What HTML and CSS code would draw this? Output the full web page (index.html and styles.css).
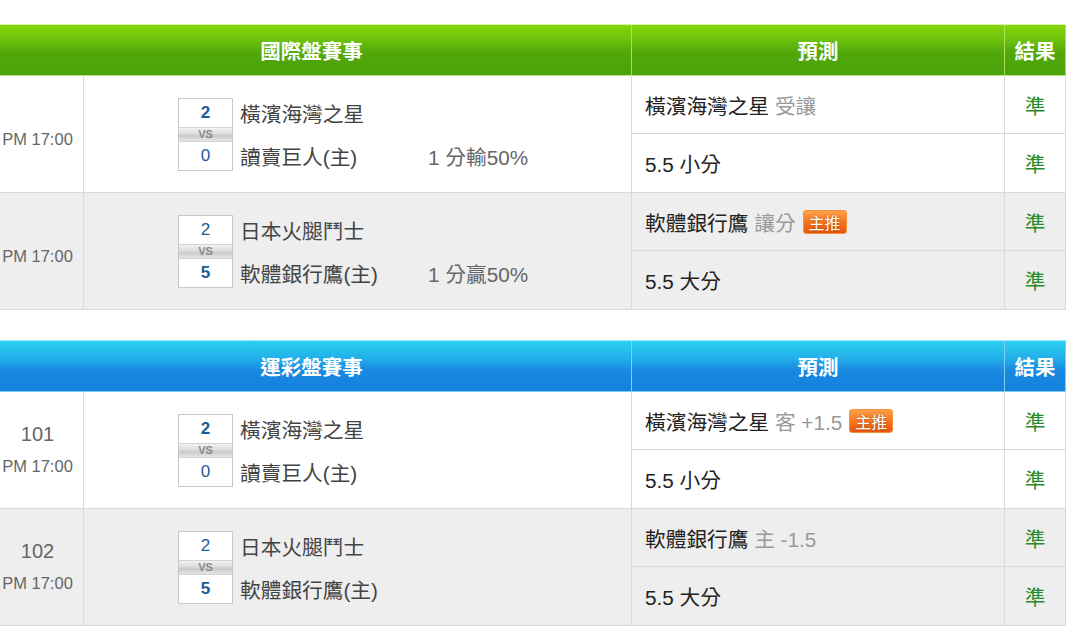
FILE: index.html
```html
<!DOCTYPE html>
<html lang="zh-Hant">
<head>
<meta charset="utf-8">
<title>賽事預測</title>
<link rel="stylesheet" href="styles.css">
</head>
<body>
<div class="page">

  <section class="board">
    <div class="head head-green">
      <div class="h-event">國際盤賽事</div>
      <div class="h-pred">預測</div>
      <div class="h-res">結果</div>
    </div>

    <div class="game">
      <div class="time time-only"><div class="clock">PM 17:00</div></div>
      <div class="match">
        <div class="score"><div class="sc win">2</div><div class="vs">VS</div><div class="sc">0</div></div>
        <div class="names">
          <div class="n1">橫濱海灣之星</div>
          <div class="n2">讀賣巨人(主)</div>
          <div class="hcp">1 分輸50%</div>
        </div>
      </div>
      <div class="pred">橫濱海灣之星 <span class="sub">受讓</span></div>
      <div class="res">準</div>
      <div class="pred">5.5 小分</div>
      <div class="res">準</div>
    </div>

    <div class="game alt">
      <div class="time time-only"><div class="clock">PM 17:00</div></div>
      <div class="match">
        <div class="score"><div class="sc">2</div><div class="vs">VS</div><div class="sc win">5</div></div>
        <div class="names">
          <div class="n1">日本火腿鬥士</div>
          <div class="n2">軟體銀行鷹(主)</div>
          <div class="hcp">1 分贏50%</div>
        </div>
      </div>
      <div class="pred">軟體銀行鷹 <span class="sub">讓分</span><span class="badge">主推</span></div>
      <div class="res">準</div>
      <div class="pred">5.5 大分</div>
      <div class="res">準</div>
    </div>
  </section>

  <section class="board">
    <div class="head head-blue">
      <div class="h-event">運彩盤賽事</div>
      <div class="h-pred">預測</div>
      <div class="h-res">結果</div>
    </div>

    <div class="game">
      <div class="time"><div class="num">101</div><div class="clock">PM 17:00</div></div>
      <div class="match">
        <div class="score"><div class="sc win">2</div><div class="vs">VS</div><div class="sc">0</div></div>
        <div class="names">
          <div class="n1">橫濱海灣之星</div>
          <div class="n2">讀賣巨人(主)</div>
        </div>
      </div>
      <div class="pred">橫濱海灣之星 <span class="sub">客 +1.5</span><span class="badge">主推</span></div>
      <div class="res">準</div>
      <div class="pred">5.5 小分</div>
      <div class="res">準</div>
    </div>

    <div class="game alt">
      <div class="time"><div class="num">102</div><div class="clock">PM 17:00</div></div>
      <div class="match">
        <div class="score"><div class="sc">2</div><div class="vs">VS</div><div class="sc win">5</div></div>
        <div class="names">
          <div class="n1">日本火腿鬥士</div>
          <div class="n2">軟體銀行鷹(主)</div>
        </div>
      </div>
      <div class="pred">軟體銀行鷹 <span class="sub">主 -1.5</span></div>
      <div class="res">準</div>
      <div class="pred">5.5 大分</div>
      <div class="res">準</div>
    </div>
  </section>

</div>
</body>
</html>
```

FILE: styles.css
```css
* { box-sizing: border-box; }

html, body {
  margin: 0;
  padding: 0;
  background: #ffffff;
}

body {
  font-family: "Liberation Sans", "Noto Sans CJK TC", sans-serif;
  font-size: 20.7px;
  color: #222;
}

.page {
  padding-top: 24px;
  margin-left: -8px;
  width: 1074px;
  display: flex;
  flex-direction: column;
  gap: 30px;
}

.board {
  display: flex;
  flex-direction: column;
}

/* header bar */
.head {
  display: grid;
  grid-template-columns: 640px 373px 61px;
  height: 52px;
  color: #fff;
  font-weight: bold;
  font-size: 20.5px;
}
.head > div {
  display: flex;
  align-items: center;
  justify-content: center;
}
.head-green {
  background: linear-gradient(#86d60d 0%, #6cc20b 30%, #52a80a 55%, #4aa20a 100%);
  border-top: 1px solid #d6f3a6;
  border-bottom: 1px solid #b4e878;
}
.head-green .h-event, .head-green .h-pred { border-right: 1px solid #a6e05c; }
.head-green .h-res { border-right: 1px solid #a6e05c; }

.head-blue {
  background: linear-gradient(#2bd0f0 0%, #22aee9 35%, #1888e0 60%, #1582de 100%);
  border-top: 1px solid #a4e6f8;
  border-bottom: 1px solid #80c8f0;
}
.head-blue .h-event, .head-blue .h-pred { border-right: 1px solid #7cd0f2; }
.head-blue .h-res { border-right: 1px solid #7cd0f2; }

/* game rows */
.game {
  display: grid;
  grid-template-columns: 92px 548px 373px 61px;
  grid-template-rows: 58px 59px;
  background: #fff;
}
.game.alt { background: #eeeeee; }

.game > div {
  border-right: 1px solid #d9d9d9;
  border-bottom: 1px solid #d9d9d9;
}

.time {
  grid-row: span 2;
  display: flex;
  flex-direction: column;
  align-items: center;
  justify-content: center;
  gap: 6px;
  color: #666;
}
.time-only { padding-top: 10px; }
.num {
  font-size: 20px;
  line-height: 26px;
}
.clock {
  font-size: 16.5px;
  line-height: 26px;
}

.match {
  grid-row: span 2;
  display: flex;
  align-items: center;
  padding-left: 94px;
}

.score {
  width: 55px;
  border: 1px solid #c8c8c8;
  display: flex;
  flex-direction: column;
}
.sc {
  height: 28px;
  background: #fff;
  color: #1b5b96;
  font-size: 17px;
  display: flex;
  align-items: center;
  justify-content: center;
}
.sc.win { font-weight: bold; }
.vs {
  height: 15px;
  background: linear-gradient(#f2f2f2 0%, #dcdcdc 45%, #c9c9c9 60%, #e6e6e6 100%);
  border-top: 1px solid #d4d4d4;
  border-bottom: 1px solid #d4d4d4;
  color: #8a8a8a;
  font-size: 11px;
  font-weight: bold;
  line-height: 13px;
  text-align: center;
}

.names {
  margin-left: 7px;
  display: grid;
  grid-template-columns: 188px auto;
  grid-template-rows: 30px 14px 28px;
  color: #444;
}
.n1, .n2, .hcp {
  display: flex;
  align-items: center;
  white-space: nowrap;
}
.n1 { grid-row: 1; grid-column: 1; }
.n2 { grid-row: 3; grid-column: 1; }
.hcp { grid-row: 3; grid-column: 2; color: #666; }

.pred {
  display: flex;
  align-items: center;
  padding-left: 13px;
  color: #222;
  white-space: pre;
}
.sub { color: #999; }

.badge {
  margin-left: 7px;
  display: inline-flex;
  align-items: center;
  justify-content: center;
  width: 44px;
  height: 24px;
  border-radius: 3px;
  border: 1px solid #f5913a;
  background: linear-gradient(#ffa04a 0%, #f77a22 45%, #e6560c 100%);
  color: #fff;
  font-size: 16px;
  text-shadow: 0 0 2px rgba(150, 50, 0, 0.8);
  white-space: nowrap;
}

.res {
  display: flex;
  align-items: center;
  justify-content: center;
  color: #2a8a2a;
}
```
